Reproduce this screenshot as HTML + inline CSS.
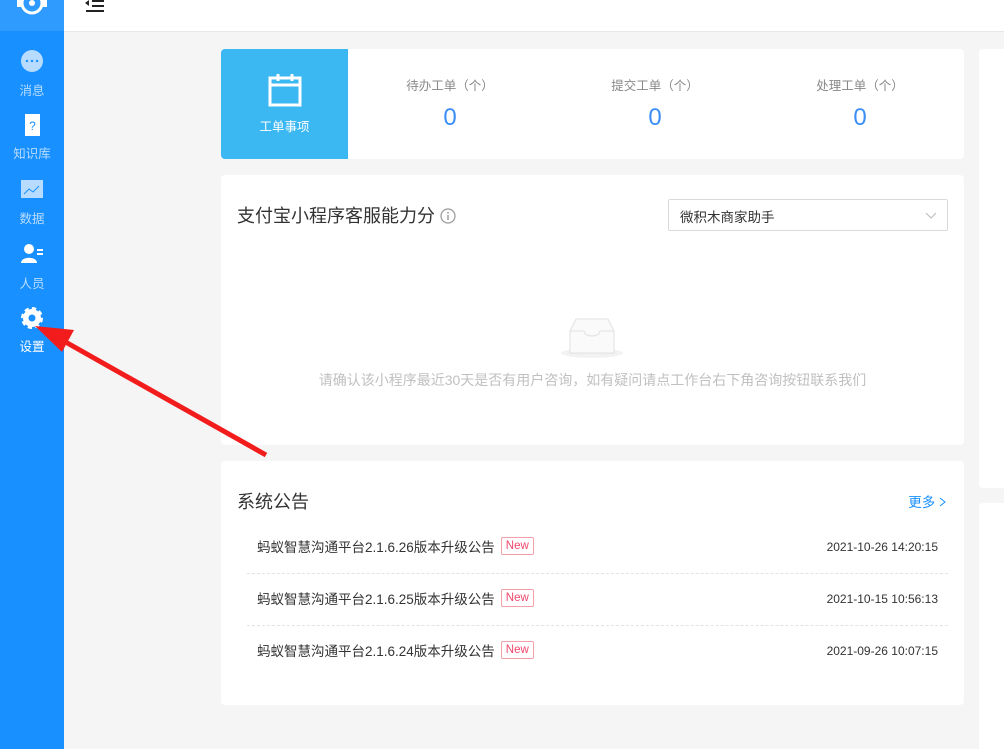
<!DOCTYPE html>
<html><head><meta charset="utf-8"><style>
*{margin:0;padding:0;box-sizing:border-box}
html,body{width:1004px;height:749px;overflow:hidden}
body{background:#f5f5f5;font-family:"Liberation Sans","Noto Sans CJK SC",sans-serif;position:relative}
.side{position:absolute;left:0;top:0;width:64px;height:749px;background:#1890ff}
.logo{position:absolute;left:0;top:0;width:64px;height:31px;background:#2f9bff}
.nav{position:absolute;left:0;width:64px;text-align:center;color:#b8dcff;font-size:12.5px}
.nav span{display:block;margin-top:5px}
.top{position:absolute;left:64px;top:0;width:940px;height:32px;background:#fff;border-bottom:1px solid #e8e8e8}
.card{position:absolute;background:#fff;border-radius:4px}
.stat{position:absolute;top:26px;width:120px;text-align:center;font-size:12.5px;color:#888}
.stat b{display:block;font-weight:normal;font-size:24px;color:#3a8ef6;margin-top:10px}
.row{position:absolute;left:26px;width:701px;height:52px;border-bottom:1px dashed #e3e3e3;font-size:13.5px;color:#333}
.row .t{position:absolute;left:10px;top:14px}
.tag{display:inline-block;border:1px solid #f5a0a8;color:#f0466a;font-size:11.5px;padding:0 4px;height:18px;line-height:16px;border-radius:2px;margin-left:6px;vertical-align:3px}
.row .d{position:absolute;right:10px;top:18px;font-size:12px;color:#333}
</style></head><body>
<div class="side">
<div class="logo"><svg width="64" height="31"><circle cx="32" cy="3" r="10" fill="none" stroke="#fff" stroke-width="3"/><circle cx="32" cy="3" r="3" fill="#fff"/><rect x="17" y="-2" width="4" height="9" fill="#fff"/><rect x="43" y="-2" width="4" height="9" fill="#fff"/></svg></div>
<div class="nav" style="top:50px"><svg width="24" height="22"><circle cx="12" cy="11" r="11" fill="#b8dcff"/><circle cx="7" cy="11" r="1.2" fill="#1890ff"/><circle cx="12" cy="11" r="1.2" fill="#1890ff"/><circle cx="17" cy="11" r="1.2" fill="#1890ff"/></svg><span>消息</span></div>
<div class="nav" style="top:113px"><svg width="24" height="24"><rect x="5" y="1" width="15" height="22" fill="#fff"/><text x="12.5" y="17" font-size="12" fill="#1890ff" text-anchor="middle">?</text></svg><span style="margin-top:3px">知识库</span></div>
<div class="nav" style="top:180px"><svg width="24" height="20"><rect x="1" y="0" width="22" height="18" fill="#b8dcff"/><path d="M4 14l5-5 4 3 6-6" stroke="#1890ff" fill="none"/></svg><span>数据</span></div>
<div class="nav" style="top:243px"><svg width="24" height="22"><circle cx="9" cy="6" r="5" fill="#fff"/><path d="M1 20c0-7 16-7 16 0z" fill="#fff"/><rect x="17" y="6" width="6" height="2" fill="#fff"/><rect x="17" y="10" width="6" height="2" fill="#fff"/></svg><span>人员</span></div>
<div class="nav" style="top:306px;color:#fff"><svg width="24" height="24"><circle cx="12" cy="12" r="9" fill="#fff" stroke="#fff" stroke-width="4" stroke-dasharray="4 3"/><circle cx="12" cy="12" r="3.5" fill="#1890ff"/></svg><span style="margin-top:3px">设置</span></div>
</div>
<div class="top"><svg width="30" height="16" style="position:absolute;left:20px;top:-3px"><path d="M8 4h12M8 9h12M2 14h18" stroke="#222" stroke-width="2"/><path d="M1 6l4-3v6z" fill="#222"/></svg></div>

<div class="card" style="left:221px;top:49px;width:743px;height:110px">
<div style="position:absolute;left:0;top:0;width:127px;height:110px;background:#3bb7f1;border-radius:4px 0 0 4px;color:#fff;text-align:center;font-size:12.5px">
<svg width="34" height="34" style="margin-top:24px"><rect x="2" y="5" width="30" height="27" fill="none" stroke="#fff" stroke-width="3"/><path d="M2 12h30M10 1v7M24 1v7" stroke="#fff" stroke-width="3"/></svg>
<div style="margin-top:6px">工单事项</div></div>
<div class="stat" style="left:169px">待办工单（个）<b>0</b></div>
<div class="stat" style="left:374px">提交工单（个）<b>0</b></div>
<div class="stat" style="left:579px">处理工单（个）<b>0</b></div>
</div>

<div class="card" style="left:221px;top:175px;width:743px;height:270px">
<div style="position:absolute;left:16px;top:27px;font-size:18px;color:#333">支付宝小程序客服能力分 <svg width="16" height="16" style="vertical-align:-2px"><circle cx="8" cy="8" r="7" fill="none" stroke="#999" stroke-width="1.2"/><rect x="7.3" y="7" width="1.4" height="5" fill="#999"/><circle cx="8" cy="4.8" r="0.9" fill="#999"/></svg></div>
<div style="position:absolute;left:447px;top:24px;width:280px;height:32px;border:1px solid #d9d9d9;border-radius:2px;font-size:13.5px;color:#333;padding:6px 11px">微积木商家助手<svg width="12" height="8" style="position:absolute;right:10px;top:12px"><path d="M1 1l5 5 5-5" stroke="#bbb" fill="none"/></svg></div>
<svg width="64" height="42" style="position:absolute;left:339px;top:142px"><ellipse cx="32" cy="36" rx="31" ry="5" fill="#f2f2f2"/><path d="M10 14l6-12h32l6 12v22H10z" fill="#fafafa" stroke="#e1e1e1"/><path d="M10 14h14a8 5 0 0 0 16 0h14" fill="none" stroke="#e1e1e1"/></svg>
<div style="position:absolute;left:0;width:743px;top:195px;text-align:center;font-size:14px;color:#c0c0c0">请确认该小程序最近30天是否有用户咨询，如有疑问请点工作台右下角咨询按钮联系我们</div>
</div>

<div class="card" style="left:221px;top:461px;width:743px;height:244px">
<div style="position:absolute;left:16px;top:27px;font-size:18px;color:#333">系统公告</div>
<div style="position:absolute;right:17px;top:30px;font-size:13.5px;color:#1890ff">更多 <svg width="8" height="10"><path d="M1 1l5 4-5 4" stroke="#1890ff" fill="none"/></svg></div>
<div class="row" style="top:61px"><span class="t">蚂蚁智慧沟通平台2.1.6.26版本升级公告<span class="tag">New</span></span><span class="d">2021-10-26 14:20:15</span></div>
<div class="row" style="top:113px"><span class="t">蚂蚁智慧沟通平台2.1.6.25版本升级公告<span class="tag">New</span></span><span class="d">2021-10-15 10:56:13</span></div>
<div class="row" style="top:165px;border:none"><span class="t">蚂蚁智慧沟通平台2.1.6.24版本升级公告<span class="tag">New</span></span><span class="d">2021-09-26 10:07:15</span></div>
</div>

<div style="position:absolute;left:979px;top:0;width:25px;height:749px;overflow:hidden">
<div class="card" style="left:0;top:49px;width:40px;height:439px"></div>
<div class="card" style="left:0;top:503px;width:40px;height:260px"></div>
</div>

<svg width="1004" height="749" style="position:absolute;left:0;top:0;pointer-events:none">
<path d="M266 455L62 340" stroke="#f21c1c" stroke-width="5"/>
<path d="M35 326L74 330L62 352z" fill="#f21c1c"/>
</svg>
</body></html>
